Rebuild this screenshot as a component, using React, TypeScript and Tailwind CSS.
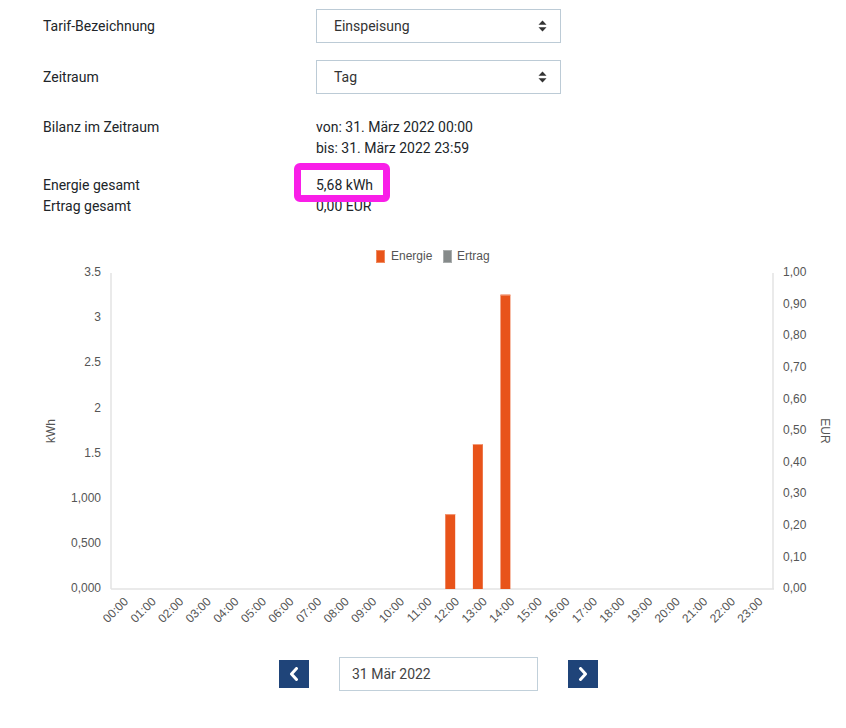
import React from "react";

const X0 = 111;
const X1 = 773;
const YT = 272;
const YB = 588;
const CW = (X1 - X0) / 24;
const PX_PER_KWH = (YB - YT) / 3.5;

const leftLabels = ["3.5", "3", "2.5", "2", "1.5", "1,000", "0,500", "0,000"];
const rightLabels = ["1,00", "0,90", "0,80", "0,70", "0,60", "0,50", "0,40", "0,30", "0,20", "0,10", "0,00"];
const bars: { h: number; v: number }[] = [
  { h: 12, v: 0.83 },
  { h: 13, v: 1.606 },
  { h: 14, v: 3.26 },
];

function SortIcon() {
  return (
    <svg width="9" height="12" viewBox="0 0 9 12" className="shrink-0">
      <path d="M4.5 0.5 L8.5 4.8 L0.5 4.8 Z" fill="#333" />
      <path d="M4.5 11.5 L8.5 7.2 L0.5 7.2 Z" fill="#333" />
    </svg>
  );
}

function Select({ value }: { value: string }) {
  return (
    <div className="w-[245px] h-[34px] border border-[#bccbd6] bg-white flex items-center justify-between pl-[17px] pr-[13px] text-[14px] text-[#333]">
      <span>{value}</span>
      <SortIcon />
    </div>
  );
}

function Chevron({ dir }: { dir: "left" | "right" }) {
  return (
    <svg width="10" height="14" viewBox="0 0 10 14">
      {dir === "left" ? (
        <path d="M7.5 1.5 L2.5 7 L7.5 12.5" fill="none" stroke="white" strokeWidth="3" strokeLinecap="round" strokeLinejoin="round" />
      ) : (
        <path d="M2.5 1.5 L7.5 7 L2.5 12.5" fill="none" stroke="white" strokeWidth="3" strokeLinecap="round" strokeLinejoin="round" />
      )}
    </svg>
  );
}

function Chart() {
  const hours = Array.from({ length: 24 }, (_, i) => `${String(i).padStart(2, "0")}:00`);
  return (
    <svg width="846" height="410" viewBox="0 230 846 410" className="block" style={{ fontFamily: '"Liberation Sans", Arial, sans-serif' }}>
      {/* legend */}
      <rect x="376.5" y="249.5" width="8" height="12" fill="#e8541a" stroke="#f08a5f" strokeWidth="1" />
      <text x="391" y="255.5" fontSize="12" fill="#555" dominantBaseline="middle">Energie</text>
      <rect x="443.5" y="249.5" width="8" height="12" fill="#858a8a" stroke="#a9adad" strokeWidth="1" />
      <text x="457" y="255.5" fontSize="12" fill="#555" dominantBaseline="middle">Ertrag</text>

      {/* axes */}
      <line x1={X0} y1={YT} x2={X0} y2={YB} stroke="#e3e3e3" strokeWidth="1.5" />
      <line x1={X1} y1={YT} x2={X1} y2={YB} stroke="#e3e3e3" strokeWidth="1.5" />
      <line x1={X0} y1={YB} x2={X1 + 1} y2={YB} stroke="#e3e3e3" strokeWidth="1.5" />

      {leftLabels.map((l, i) => (
        <text key={l} x="101" y={YT + (i * (YB - YT)) / 7} fontSize="12" fill="#555" textAnchor="end" dominantBaseline="middle">
          {l}
        </text>
      ))}
      {rightLabels.map((l, i) => (
        <text key={l} x="783" y={YT + (i * (YB - YT)) / 10} fontSize="12" fill="#555" dominantBaseline="middle">
          {l}
        </text>
      ))}

      <text transform="translate(52 430) rotate(-90)" fontSize="12" fill="#555" textAnchor="middle" dominantBaseline="middle">kWh</text>
      <text transform="translate(824 430) rotate(90)" fontSize="12" fill="#555" textAnchor="middle" dominantBaseline="middle">EUR</text>

      {bars.map((b) => {
        const x = X0 + b.h * CW + 3.3;
        const hgt = b.v * PX_PER_KWH;
        return (
          <g key={b.h}>
            <rect x={x} y={YB - hgt} width="9.9" height={hgt} fill="#e8531a" />
            <rect x={x} y={YB - hgt} width="9.9" height="1" fill="#f39a78" />
          </g>
        );
      })}

      {hours.map((h, i) => {
        const x = X0 + (i + 0.5) * CW + 2;
        return (
          <text key={h} transform={`translate(${x} 599) rotate(-45)`} fontSize="12" fill="#555" textAnchor="end" dominantBaseline="middle">
            {h}
          </text>
        );
      })}
    </svg>
  );
}

export default function App() {
  return (
    <div className="w-[846px] h-[728px] bg-white text-[#212529] text-[14px] overflow-hidden" style={{ fontFamily: 'Roboto, "Liberation Sans", Arial, sans-serif' }}>
      <div className="pl-[43px] pt-[9px]">
        <div className="flex items-center h-[34px]">
          <div className="w-[273px]">Tarif-Bezeichnung</div>
          <Select value="Einspeisung" />
        </div>
        <div className="flex items-center h-[34px] mt-[17px]">
          <div className="w-[273px]">Zeitraum</div>
          <Select value="Tag" />
        </div>
        <div className="flex mt-[23px] leading-[21px]">
          <div className="w-[273px]">Bilanz im Zeitraum</div>
          <div>
            <div>von: 31. März 2022 00:00</div>
            <div>bis: 31. März 2022 23:59</div>
          </div>
        </div>
        <div className="flex mt-[16px] leading-[21px]">
          <div className="w-[273px]">
            <div>Energie gesamt</div>
            <div>Ertrag gesamt</div>
          </div>
          <div>
            <div className="relative">
              <span>5,68 kWh</span>
              <div className="absolute left-[-22px] top-[-12px] w-[96px] h-[39px] border-[7px] border-[#f91ee8] rounded-[6px]" />
            </div>
            <div>0,00 EUR</div>
          </div>
        </div>
      </div>

      <div className="mt-[14px]">
        <Chart />
      </div>

      <div className="flex items-center pl-[279px] mt-[16px] h-[34px]">
        <div className="w-[30px] h-[28px] bg-[#1f4479] flex items-center justify-center">
          <Chevron dir="left" />
        </div>
        <div className="ml-[30px] w-[199px] h-[34px] border border-[#c1d0da] flex items-center pl-[12px] text-[14px] text-[#444]">
          31 Mär 2022
        </div>
        <div className="ml-[30px] w-[30px] h-[28px] bg-[#1f4479] flex items-center justify-center">
          <Chevron dir="right" />
        </div>
      </div>
    </div>
  );
}
